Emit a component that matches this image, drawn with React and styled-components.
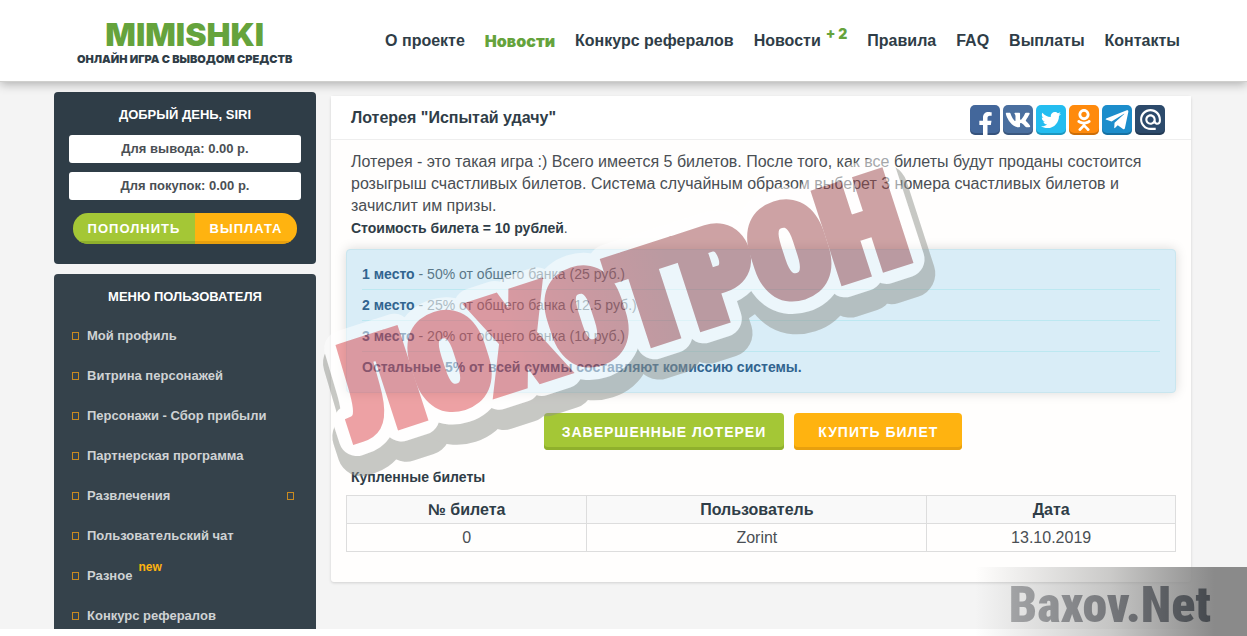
import React from "react";
import styled, { createGlobalStyle } from 'styled-components'
import { FaFacebookF, FaVk, FaTwitter, FaOdnoklassniki, FaTelegramPlane } from 'react-icons/fa'
import { MdAlternateEmail } from 'react-icons/md'

const GlobalStyle = createGlobalStyle`
* {
box-sizing: border-box;
}
body {
margin: 0;
background: #ffffff;
font-family: "Liberation Sans", Arial, sans-serif;
color: #4a4f54;
}
a {
color: inherit;
text-decoration: none;
}
`

const Page = styled.div`
position: relative;
overflow: hidden;
`

const Header = styled.header`
position: relative;
display: flex;
align-items: center;
justify-content: space-between;
height: 82px;
padding: 0 67px 0 77px;
background: #ffffff;
border-bottom: 1px solid #cfcfcd;
box-shadow: 0 2px 10px rgba(0, 0, 0, 0.3);
`

const Logo = styled.a`
display: flex;
flex-direction: column;
align-items: center;
padding-top: 2px;
font-family: Inter, "Liberation Sans", sans-serif;
font-weight: 900;
`

const LogoName = styled.span`
font-size: 32px;
line-height: 34px;
color: #65a33c;
`

const LogoSlogan = styled.span`
font-size: 11px;
line-height: 14px;
color: #2f3d47;
`

const Nav = styled.nav`
display: flex;
align-items: center;
gap: 20px;
font-size: 16px;
font-weight: bold;
color: #2f3d47;
`

const NavLink = styled.a`
white-space: nowrap;
color: ${props => props.$active ? '#65a33c' : 'inherit'};
font-family: ${props => props.$active ? 'Inter, sans-serif' : 'inherit'};
font-weight: ${props => props.$active ? '900' : 'bold'};
`

const Count = styled.sup`
margin-left: 5px;
line-height: 0;
font-family: Inter, sans-serif;
font-size: 14px;
font-weight: 900;
color: #65a33c;
`

const Main = styled.main`
display: flex;
align-items: flex-start;
gap: 15px;
padding: 10px 56px 0 54px;
background: #f4f4f4;
`

const Sidebar = styled.aside`
display: flex;
flex-direction: column;
flex: 0 0 262px;
gap: 10px;
`

const Panel = styled.section`
padding: 14px 15px 20px;
background: ${props => props.$light ? '#35424b' : '#2f3d47'};
border-radius: 4px;
`

const MenuPanel = styled(Panel)`
padding-bottom: 0;
border-radius: 4px 4px 0 0;
`

const PanelTitle = styled.h2`
margin: 0 0 11px;
font-size: 13px;
line-height: 18px;
text-align: center;
color: #ffffff;
`

const Balance = styled.div`
margin-bottom: 9px;
font-size: 13px;
font-weight: bold;
line-height: 28px;
text-align: center;
background: #ffffff;
border-radius: 3px;
color: #4a4f54;
`

const Wallet = styled.div`
display: flex;
justify-content: center;
margin: 13px 4px 0;
border-radius: 15px;
overflow: hidden;
`

const Button = styled.button`
border: none;
font-family: inherit;
font-weight: bold;
letter-spacing: 1px;
color: #ffffff;
cursor: pointer;
background: ${props => props.$orange ? '#ffb310' : '#a4c736'};
box-shadow: inset 0 -3px 0 ${props => props.$orange ? '#e8a00e' : '#8fb02c'};
`

const WalletButton = styled(Button)`
flex: 1 1 auto;
height: 31px;
padding: 0 8px;
font-size: 13px;
`

const BigButton = styled(Button)`
height: 37px;
padding: 0 ${props => props.$orange ? '24px' : '18px'};
font-size: 14px;
border-radius: 4px;
`

const MenuList = styled.ul`
display: flex;
flex-direction: column;
gap: 12px;
margin: 15px 0 0;
padding: 0;
list-style: none;
`

const MenuItem = styled.li`
display: flex;
align-items: center;
justify-content: space-between;
height: 28px;
padding: 0 7px 0 3px;
font-size: 13px;
font-weight: bold;
color: #cfd2d4;
`

const MenuLink = styled.a`
display: flex;
align-items: center;
gap: 8px;
`

const Square = styled.i`
width: 7px;
height: 8px;
margin-top: 2px;
border: 1px solid #c98a20;
`

const New = styled.sup`
align-self: flex-start;
margin: -8px 0 0 -2px;
font-size: 12px;
color: #ffb310;
`

const Content = styled.section`
flex: 1 1 auto;
margin: 4px 0 47px;
background: #fffefd;
border-radius: 3px;
box-shadow: 0 1px 3px rgba(0, 0, 0, 0.15);
`

const ContentHead = styled.div`
display: flex;
align-items: center;
justify-content: space-between;
height: 44px;
padding: 0 26px 0 20px;
background: #ffffff;
border-bottom: 1px solid #eeeeee;
`

const Title = styled.h1`
margin: 0;
font-size: 16px;
color: #2f3d47;
`

const Socials = styled.div`
display: flex;
gap: 3px;
padding-top: 4px;
`

const Social = styled.a`
display: flex;
align-items: ${props => props.$low ? 'flex-end' : 'center'};
justify-content: center;
width: 30px;
height: 30px;
background: ${props => props.$color};
border-radius: 5px;
box-shadow: inset 0 -2px 0 rgba(0, 0, 0, 0.2);
color: #ffffff;
`

const Body = styled.div`
padding: 11px 15px 30px;
`

const Text = styled.p`
margin: 0;
padding: 0 5px;
font-size: 16px;
line-height: 22px;
`

const Small = styled.p`
margin: 0;
padding: 0 5px;
font-size: 14px;
line-height: 22px;

strong {
color: #2f3d47;
}
`

const Prizes = styled.ul`
margin: 10px 0 20px;
padding: 9px 15px 10px;
list-style: none;
background: #d9edf7;
border: 1px solid #c9e6ef;
border-radius: 4px;
box-shadow: 0 0 12px rgba(0, 0, 0, 0.15);
`

const Prize = styled.li`
padding: 6px 0;
font-size: 14px;
line-height: 18px;
color: #5b7888;
border-bottom: ${props => props.$last ? 'none' : '1px solid #bce8f1'};

strong {
color: #31648f;
}
`

const Buttons = styled.div`
display: flex;
justify-content: center;
gap: 10px;
margin: 0 16px 16px 0;
`

const Table = styled.table`
width: 100%;
margin-top: 7px;
table-layout: fixed;
border-collapse: collapse;
font-size: 16px;
text-align: center;
`

const Cell = styled.td`
height: 28px;
padding: 0;
border: 1px solid #dddddd;
`

const HeadCell = styled.th`
width: ${props => props.$width};
height: 28px;
padding: 0;
background: #f9f9f9;
border: 1px solid #dddddd;
color: #2f3d47;
`

const Stamp = styled.svg`
position: absolute;
left: 310px;
top: 140px;
width: 640px;
height: 350px;
overflow: visible;
opacity: 0.5;
pointer-events: none;
font-family: Impact, "Roboto Condensed", "Open Sans Condensed", Roboto, sans-serif;
font-weight: 900;
`

const Footer = styled.footer`
height: 7px;
background: #ffffff;
`

const Watermark = styled.div`
position: absolute;
right: 0;
bottom: 0;
width: 272px;
height: 69px;
padding-right: 36px;
background: linear-gradient(to right, rgba(225, 225, 225, 0) 0%, rgba(150, 150, 148, 0.5) 50%, #8a8a8a 88%);
font-family: Impact, "Roboto Condensed", "Open Sans Condensed", Roboto, sans-serif;
font-size: 50px;
font-weight: 900;
line-height: 76px;
text-align: right;
pointer-events: none;

span {
background: linear-gradient(to right, #a3a4a6, #6c6e72 60%, #45494e);
background-clip: text;
color: transparent;
}
`

const navLinks = [
    { title: 'О проекте' },
    { title: 'Новости', active: true },
    { title: 'Конкурс рефералов' },
    { title: 'Новости', count: '+ 2' },
    { title: 'Правила' },
    { title: 'FAQ' },
    { title: 'Выплаты' },
    { title: 'Контакты' },
]

const menuLinks = [
    { title: 'Мой профиль' },
    { title: 'Витрина персонажей' },
    { title: 'Персонажи - Сбор прибыли' },
    { title: 'Партнерская программа' },
    { title: 'Развлечения', more: true },
    { title: 'Пользовательский чат' },
    { title: 'Разное', isNew: true },
    { title: 'Конкурс рефералов' },
]

const socials = [
    { name: 'Facebook', color: '#43679b', low: true, icon: <FaFacebookF size={23} /> },
    { name: 'VK', color: '#4a6f9f', icon: <FaVk size={26} /> },
    { name: 'Twitter', color: '#24bdf0', icon: <FaTwitter size={20} /> },
    { name: 'Odnoklassniki', color: '#ff8a0c', icon: <FaOdnoklassniki size={22} /> },
    { name: 'Telegram', color: '#1c8dcb', icon: <FaTelegramPlane size={26} /> },
    { name: 'Mail', color: '#2c4a6b', icon: <MdAlternateEmail size={25} /> },
]

const prizes = [
    { place: '1 место', text: ' - 50% от общего банка (25 руб.)' },
    { place: '2 место', text: ' - 25% от общего банка (12.5 руб.)' },
    { place: '3 место', text: ' - 20% от общего банка (10 руб.)' },
    { place: 'Остальные 5% от всей суммы составляют комиссию системы.', text: '' },
]

const App = () => {

    const displayStamp = () => {
        return (
            <Stamp viewBox="0 0 640 350" aria-hidden="true">
                <defs>
                    <linearGradient id="stampRed" x1="0" y1="0" x2="1" y2="0">
                        <stop offset="0.3" stopColor="#dc474d" />
                        <stop offset="0.6" stopColor="#9d494d" />
                    </linearGradient>
                </defs>
                <g transform="rotate(-18 45 306)" fontSize="126" strokeLinejoin="round">
                    <text x="46" y="314" fill="#91938d" stroke="#91938d" strokeWidth="48">ЛОХОТРОН</text>
                    <text x="46" y="299" fill="#ffffff" stroke="#ffffff" strokeWidth="36">ЛОХОТРОН</text>
                    <text x="46" y="299" fill="url(#stampRed)" stroke="url(#stampRed)" strokeWidth="11" strokeLinejoin="miter">ЛОХОТРОН</text>
                </g>
            </Stamp>
        )
    }

    return (
        <Page>
            <GlobalStyle />
            <Header>
                <Logo href="#">
                    <LogoName>MIMISHKI</LogoName>
                    <LogoSlogan>ОНЛАЙН ИГРА С ВЫВОДОМ СРЕДСТВ</LogoSlogan>
                </Logo>
                <Nav>
                    {navLinks.map((item, index) => {
                        return (
                            <NavLink key={index} href="#" $active={item.active}>
                                {item.title}
                                {item.count && <Count>{item.count}</Count>}
                            </NavLink>
                        )
                    })}
                </Nav>
            </Header>

            <Main>
                <Sidebar>
                    <Panel>
                        <PanelTitle>ДОБРЫЙ ДЕНЬ, SIRI</PanelTitle>
                        <Balance>Для вывода: 0.00 р.</Balance>
                        <Balance>Для покупок: 0.00 р.</Balance>
                        <Wallet>
                            <WalletButton>ПОПОЛНИТЬ</WalletButton>
                            <WalletButton $orange>ВЫПЛАТА</WalletButton>
                        </Wallet>
                    </Panel>
                    <MenuPanel $light>
                        <PanelTitle>МЕНЮ ПОЛЬЗОВАТЕЛЯ</PanelTitle>
                        <MenuList>
                            {menuLinks.map((item) => {
                                return (
                                    <MenuItem key={item.title}>
                                        <MenuLink href="#">
                                            <Square />
                                            {item.title}
                                            {item.isNew && <New>new</New>}
                                        </MenuLink>
                                        {item.more && <Square />}
                                    </MenuItem>
                                )
                            })}
                        </MenuList>
                    </MenuPanel>
                </Sidebar>

                <Content>
                    <ContentHead>
                        <Title>Лотерея "Испытай удачу"</Title>
                        <Socials>
                            {socials.map((item) => {
                                return (
                                    <Social key={item.name} href="#" aria-label={item.name} $color={item.color} $low={item.low}>{item.icon}</Social>
                                )
                            })}
                        </Socials>
                    </ContentHead>
                    <Body>
                        <Text>Лотерея - это такая игра :) Всего имеется 5 билетов. После того, как все билеты будут проданы состоится розыгрыш счастливых билетов. Система случайным образом выберет 3 номера счастливых билетов и зачислит им призы.</Text>
                        <Small><strong>Стоимость билета = 10 рублей</strong>.</Small>
                        <Prizes>
                            {prizes.map((item, index) => {
                                return (
                                    <Prize key={item.place} $last={index === prizes.length - 1}>
                                        <strong>{item.place}</strong>{item.text}
                                    </Prize>
                                )
                            })}
                        </Prizes>
                        <Buttons>
                            <BigButton>ЗАВЕРШЕННЫЕ ЛОТЕРЕИ</BigButton>
                            <BigButton $orange>КУПИТЬ БИЛЕТ</BigButton>
                        </Buttons>
                        <Small><strong>Купленные билеты</strong></Small>
                        <Table>
                            <thead>
                                <tr>
                                    <HeadCell $width="29%">№ билета</HeadCell>
                                    <HeadCell>Пользователь</HeadCell>
                                    <HeadCell $width="30%">Дата</HeadCell>
                                </tr>
                            </thead>
                            <tbody>
                                <tr>
                                    <Cell>0</Cell>
                                    <Cell>Zorint</Cell>
                                    <Cell>13.10.2019</Cell>
                                </tr>
                            </tbody>
                        </Table>
                    </Body>
                </Content>
            </Main>
            <Footer />

            {displayStamp()}
            <Watermark><span>Baxov.Net</span></Watermark>
        </Page>
    )
}

export default App
